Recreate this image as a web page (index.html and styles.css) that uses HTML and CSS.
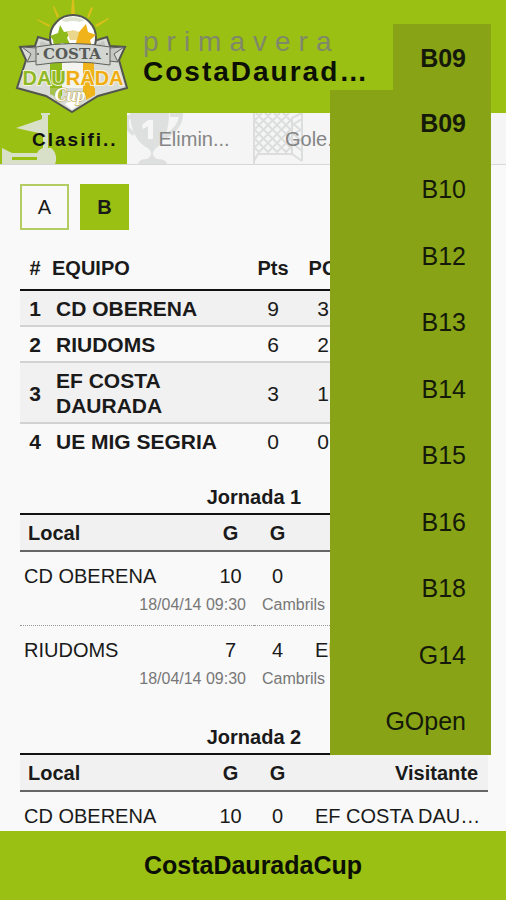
FILE: index.html
```html
<!DOCTYPE html>
<html lang="es">

<head>
    <meta charset="UTF-8">
    <meta name="viewport" content="width=device-width, initial-scale=1.0">
    <title>CostaDauradaCup</title>
    <link rel="stylesheet" href="styles.css">
</head>

<body>
    <header class="header">
        <svg class="logo" viewBox="0 0 128 113" role="img" aria-label="Costa Daurada Cup">
            <!-- Sun rays -->
            <g fill="#d9bf1a">
                <path d="M72 0h2l1 14h-4z" />
                <path d="M53 7l1-1 5 10-2 2z" />
                <path d="M93 8l-2-1-4 10 2 1z" />
                <path d="M37 20v-1l13 6-1 2z" />
                <path d="M108 18l1 1-12 8-2-2z" />
            </g>
            <!-- Shield -->
            <path d="M38 37l14 4h42l13-4 3 9 15 1-6 13 8 28-29 8-26 16-26-16-29-8 9-28-6-13 15-1z" fill="#d9dbd7" stroke="#53564f" stroke-width="2" />
            <path d="M41 41l10 4h44l9-4 2 6H39z" fill="#c3c6c1" />
            <path d="M50 62h12v34l-12-6z" fill="#8fba1c" />
            <path d="M62 62h21v26H62z" fill="#f4f5f1" />
            <path d="M83 62h11v28l-11 7z" fill="#f0b31a" />
            <path d="M86 88h9v7l-9 5z" fill="#f0b31a" />
            <path d="M50 88h11v11l-11-5z" fill="#a4c24c" />
            <path d="M65 104l8-6 7 5-8 7z" fill="#fff" />
            <!-- Ball -->
            <circle cx="73" cy="38" r="23" fill="#fff" stroke="#53564f" stroke-width="2" />
            <path d="M60 25l4 7 7-1-4 7 4 8-9-3-8 4-1-7-3-4 8-3z" fill="#8fba1c" />
            <path d="M86 24l2 8 8 3-6 5 2 7-8-3-9 2 2-7-8-7 10 0z" fill="#f0b31a" />
            <path d="M67 32l6-2 6 2-2 8h-7z" fill="#ead78d" />
            <path d="M61 20q12-6 24 0l-5 2q-7-2-14 0z" fill="#dde3cf" />
            <!-- Ribbon -->
            <path d="M22 47l15 1v13l-10 1 4-8zM124 47l-15 1v13l9 1-4-8z" fill="#c4c7c2" stroke="#5e615b" />
            <path d="M36 47q37-7 74 0v18q-37-6-74 0z" fill="#d4d6d2" stroke="#5e615b" />
            <text class="logo-costa" x="72" y="59" text-anchor="middle">COSTA</text>
            <circle cx="38" cy="54" r="1" fill="#555" />
            <circle cx="107" cy="54" r="1" fill="#555" />
            <text class="logo-daurada" x="73" y="85" text-anchor="middle"><tspan fill="#90b928">DAU</tspan><tspan fill="#f0ad13">RADA</tspan></text>
            <text class="logo-cup" x="70" y="101" text-anchor="middle">Cup</text>
        </svg>
        <div class="titles">
            <p class="season">primavera</p>
            <h1 class="name">CostaDauradaCup</h1>
        </div>
        <div class="category">
            <button type="button" class="category-current" aria-expanded="true" aria-controls="categoryMenu">B09</button>
            <ul class="category-menu" id="categoryMenu">
                <li><button type="button" class="selected">B09</button></li>
                <li><button type="button">B10</button></li>
                <li><button type="button">B12</button></li>
                <li><button type="button">B13</button></li>
                <li><button type="button">B14</button></li>
                <li><button type="button">B15</button></li>
                <li><button type="button">B16</button></li>
                <li><button type="button">B18</button></li>
                <li><button type="button">G14</button></li>
                <li><button type="button">GOpen</button></li>
            </ul>
        </div>
    </header>

    <nav class="tabs">
        <a class="tab active" href="#clasificacion">
            <svg class="tab-icon" viewBox="0 0 60 51" aria-hidden="true">
                <path d="M16 15l26-9V2h-1V0h9v2h-2v33h3q6 4 5 13l-1 3H2V35l10 5h25q2-4 6-5V21z" fill="#d9e0c8" />
                <path d="M12 44h25v3H12z" fill="#9ac014" />
            </svg>
            <span>Clasifi..</span>
        </a>
        <a class="tab" href="#eliminatorias">
            <svg class="tab-icon" viewBox="0 0 60 51" aria-hidden="true">
                <path d="M3 0h39q0 26-14 36-5 6 2 10 9 0 10 5H11q1-5 9-5 7-4 2-10Q4 27 3 0z" fill="#dedfdf" />
                <path d="M43 2h11q-1 14-17 22M4 4H0v10q3 5 7 7" fill="none" stroke="#dedfdf" stroke-width="4" />
                <path d="M15 12l6-5h5v19h-5V13l-5 3z" fill="#f6f6f6" />
            </svg>
            <span>Elimin...</span>
        </a>
        <a class="tab" href="#goleadores">
            <svg class="tab-icon" viewBox="0 0 60 51" aria-hidden="true">
                <path d="M1 0v51M49 0v48M39 5v36M49 0L39 5M5 41h34l10 7M5 41l-4 7" fill="none" stroke="#dcdddd" stroke-width="2" />
                <path d="M2 7l7-7M2 16L18 0M2 25L27 0M2 34L36 0M4 41L39 6M13 41l26-26M22 41l17-17M31 41l8-8M30 0l9 9M21 0l18 18M12 0l27 27M3 0l36 36M2 8l33 33M2 17l24 24M2 26l15 15M2 35l6 6M39 12l10-6M39 22l10-6M39 32l10-6M39 20l10 8M39 30l10 8M39 10l10 8" fill="none" stroke="#dcdddd" stroke-width="2" />
            </svg>
            <span>Gole...</span>
        </a>
        <a class="tab" href="#equipos"><span>Equipos</span></a>
    </nav>

    <main class="content" id="clasificacion">
        <div class="groups">
            <button type="button" class="group">A</button>
            <button type="button" class="group active">B</button>
        </div>

        <table class="standings">
            <colgroup>
                <col class="col-pos">
                <col>
                <col class="col-num">
                <col class="col-num">
                <col class="col-goals">
                <col class="col-goals">
            </colgroup>
            <thead>
                <tr>
                    <th>#</th>
                    <th class="team">EQUIPO</th>
                    <th>Pts</th>
                    <th>PG</th>
                    <th>PE</th>
                    <th>PP</th>
                </tr>
            </thead>
            <tbody>
                <tr>
                    <th>1</th>
                    <th class="team">CD OBERENA</th>
                    <td>9</td>
                    <td>3</td>
                    <td>0</td>
                    <td>0</td>
                </tr>
                <tr>
                    <th>2</th>
                    <th class="team">RIUDOMS</th>
                    <td>6</td>
                    <td>2</td>
                    <td>0</td>
                    <td>1</td>
                </tr>
                <tr>
                    <th>3</th>
                    <th class="team">EF COSTA DAURADA</th>
                    <td>3</td>
                    <td>1</td>
                    <td>0</td>
                    <td>2</td>
                </tr>
                <tr>
                    <th>4</th>
                    <th class="team">UE MIG SEGRIA</th>
                    <td>0</td>
                    <td>0</td>
                    <td>0</td>
                    <td>3</td>
                </tr>
            </tbody>
        </table>

        <table class="matches">
            <caption>Jornada 1</caption>
            <colgroup>
                <col>
                <col class="col-score">
                <col class="col-score">
                <col>
            </colgroup>
            <thead>
                <tr>
                    <th class="local">Local</th>
                    <th>G</th>
                    <th>G</th>
                    <th class="visitor">Visitante</th>
                </tr>
            </thead>
            <tbody>
                <tr class="match">
                    <td class="local">CD OBERENA</td>
                    <td>10</td>
                    <td>0</td>
                    <td class="visitor">UE MIG SEGRIA</td>
                </tr>
                <tr class="info">
                    <td class="date" colspan="2">18/04/14 09:30</td>
                    <td class="place" colspan="2">Cambrils</td>
                </tr>
                <tr class="match">
                    <td class="local">RIUDOMS</td>
                    <td>7</td>
                    <td>4</td>
                    <td class="visitor">EF COSTA DAURADA</td>
                </tr>
                <tr class="info">
                    <td class="date" colspan="2">18/04/14 09:30</td>
                    <td class="place" colspan="2">Cambrils</td>
                </tr>
            </tbody>
        </table>

        <table class="matches">
            <caption>Jornada 2</caption>
            <colgroup>
                <col>
                <col class="col-score">
                <col class="col-score">
                <col>
            </colgroup>
            <thead>
                <tr>
                    <th class="local">Local</th>
                    <th>G</th>
                    <th>G</th>
                    <th class="visitor">Visitante</th>
                </tr>
            </thead>
            <tbody>
                <tr class="match">
                    <td class="local">CD OBERENA</td>
                    <td>10</td>
                    <td>0</td>
                    <td class="visitor">EF COSTA DAURADA</td>
                </tr>
            </tbody>
        </table>
    </main>

    <footer class="footer">CostaDauradaCup</footer>
</body>

</html>
```

FILE: styles.css
```css
* {
    box-sizing: border-box;
}

body {
    margin: 0;
    height: 100vh;
    display: flex;
    flex-direction: column;
    background-color: #f9f9f9;
    color: #1a1a1a;
    font-family: "Liberation Sans", Arial, sans-serif;
    font-size: 20px;
    line-height: 25px;
}

button {
    border: none;
    padding: 0;
    background: none;
    color: inherit;
    font: inherit;
    cursor: pointer;
}

/* Header */
.header {
    display: flex;
    align-items: flex-start;
    flex-shrink: 0;
    padding-right: 15px;
    background-color: #9ac014;
}

.logo {
    flex-shrink: 0;
    width: 128px;
    height: 113px;
    margin-right: 15px;
}

.logo-costa {
    font-family: "DejaVu Serif", serif;
    font-size: 15px;
    font-weight: bold;
    fill: #565a58;
}

.logo-daurada {
    font-size: 20px;
    font-weight: bold;
    stroke: #f5f2dc;
    stroke-width: 2px;
    paint-order: stroke;
}

.logo-cup {
    font-family: "Liberation Serif", serif;
    font-size: 18px;
    font-style: italic;
    font-weight: bold;
    fill: #fff;
    stroke: #b9a63c;
    stroke-width: 1px;
    paint-order: stroke;
}

.titles {
    flex: 1;
    min-width: 0;
    margin-right: 20px;
    padding-top: 27px;
    font-size: 28px;
    line-height: 30px;
}

.season {
    margin: 0;
    color: #80886a;
    letter-spacing: 8px;
}

.name {
    margin: 0;
    overflow: hidden;
    color: #0c0f04;
    font-size: 28px;
    letter-spacing: 2px;
    text-overflow: ellipsis;
    white-space: nowrap;
}

/* Category drop-down */
.category {
    position: relative;
    margin-top: 24px;
    color: #14190a;
    font-size: 25px;
}

.category-current {
    display: block;
    width: 98px;
    height: 66px;
    padding: 2px 25px 0 0;
    background-color: #88a315;
    font-weight: bold;
    text-align: right;
}

.category-menu {
    position: absolute;
    top: 100%;
    right: 0;
    z-index: 10;
    display: flex;
    flex-direction: column;
    width: 161px;
    height: 665px;
    margin: 0;
    padding: 0;
    background-color: #88a315;
    list-style: none;
}

.category-menu li {
    flex: 1;
}

.category-menu button {
    width: 100%;
    height: 100%;
    padding-right: 25px;
    text-align: right;
}

.category-menu .selected {
    font-weight: bold;
}

/* Tabs */
.tabs {
    display: flex;
    flex-shrink: 0;
    border-bottom: 1px solid #d8d8d8;
    background-color: #f5f5f5;
}

.tab {
    position: relative;
    width: 25%;
    min-width: 0;
    height: 51px;
    padding-left: 32px;
    color: #858585;
    line-height: 53px;
    text-decoration: none;
}

.tab span {
    position: relative;
    white-space: nowrap;
}

.tab.active {
    background-color: #9ac014;
    color: #111;
    font-size: 19px;
    font-weight: bold;
    letter-spacing: 2px;
}

.tab-icon {
    position: absolute;
    top: 0;
    left: 0;
    width: 60px;
    height: 51px;
}

/* Content */
.content {
    flex: 1;
    min-height: 0;
    padding: 19px 18px 0 20px;
    overflow-y: auto;
    scrollbar-width: none;
}

.groups {
    display: flex;
    gap: 11px;
    margin-bottom: 21px;
}

.group {
    width: 49px;
    height: 46px;
    border: 2px solid #b4cd62;
}

.group.active {
    border-color: #9ac014;
    background-color: #9ac014;
    font-weight: bold;
}

table {
    width: 100%;
    border-collapse: separate;
    border-spacing: 0;
    table-layout: fixed;
}

th,
td {
    padding: 0;
    text-align: center;
}

/* Standings */
.standings {
    font-size: 21px;
}

.col-pos {
    width: 30px;
}

.col-num {
    width: 50px;
}

.col-goals {
    width: 70px;
}

.standings thead th {
    padding: 5px 0 8px;
    border-bottom: 2px solid #111;
    font-size: 20px;
}

.standings tbody th,
.standings tbody td {
    padding: 5px 0 4px;
    border-bottom: 2px solid #d2d2d2;
}

.standings tbody tr:nth-child(odd) {
    background-color: #f1f1f1;
}

.standings tbody tr:last-child th,
.standings tbody tr:last-child td {
    border-bottom: none;
}

.standings .team {
    padding-left: 2px;
    text-align: left;
}

.standings tbody .team {
    padding-left: 6px;
}

/* Matches */
.matches {
    margin-top: 27px;
}

.matches caption {
    padding-bottom: 3px;
    font-weight: bold;
}

.col-score {
    width: 47px;
}

.matches thead th {
    padding: 6px 0 4px;
    border-top: 2px solid #111;
    border-bottom: 2px solid #666;
    background-color: #f1f1f1;
}

.matches thead .local {
    padding-left: 8px;
}

.matches thead .visitor {
    padding-right: 10px;
}

.matches .local {
    text-align: left;
}

.matches .visitor {
    text-align: right;
}

.match td {
    padding-top: 12px;
}

.match .local {
    padding-left: 4px;
}

.match .visitor {
    padding-left: 14px;
    padding-right: 2px;
    overflow: hidden;
    text-overflow: ellipsis;
    white-space: nowrap;
}

.info td {
    padding: 6px 0 10px;
    border-bottom: 1px dotted #999;
    color: #777;
    font-size: 16px;
    line-height: 20px;
}

.info:last-child td {
    padding-bottom: 9px;
    border-bottom: none;
}

.info .date {
    padding-right: 8px;
    text-align: right;
}

.info .place {
    padding-left: 8px;
    text-align: left;
}

/* Footer */
.footer {
    flex-shrink: 0;
    padding: 22px 0;
    background-color: #9ac014;
    color: #0c0f04;
    font-size: 25px;
    font-weight: bold;
    text-align: center;
}
```
